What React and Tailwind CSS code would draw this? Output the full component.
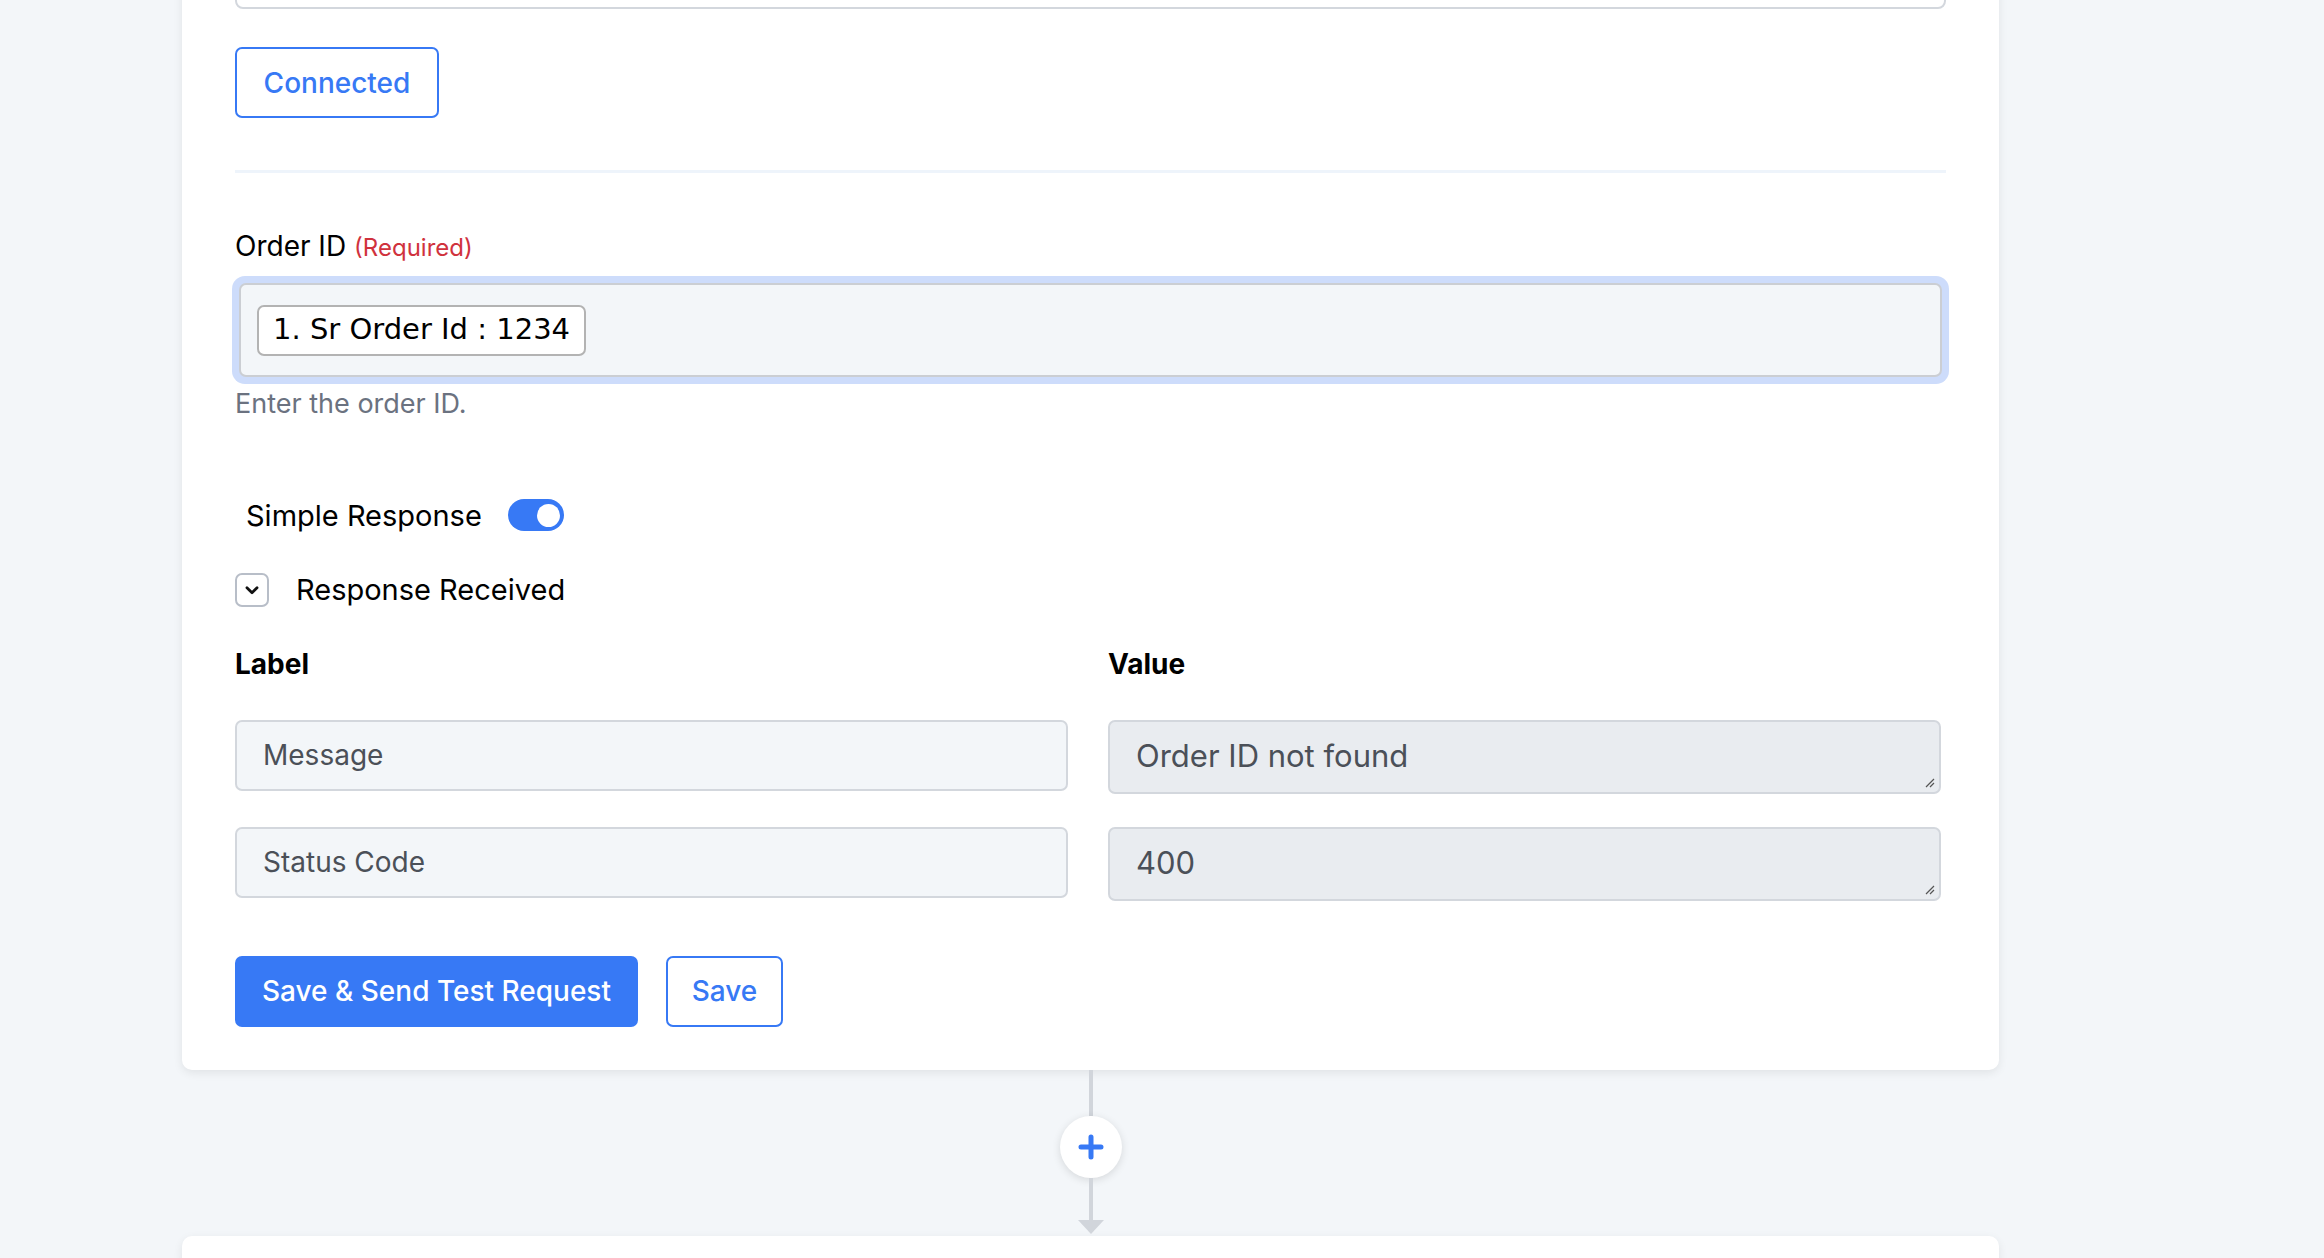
import React from 'react';

const font = { fontFamily: 'Inter, "Noto Sans", sans-serif' };

const Toggle = ({ on }) => (
  <span
    className={`inline-flex items-center w-[56px] h-[32px] rounded-full px-[4px] ${
      on ? 'bg-[#3779f5] justify-end' : 'bg-gray-300 justify-start'
    }`}
  >
    <span className="block w-[23px] h-[23px] rounded-full bg-white" />
  </span>
);

const ChevronBox = () => (
  <span className="flex items-center justify-center w-[34px] h-[34px] rounded-[7px] border-2 border-[#b8bec8] bg-white">
    <svg width="22" height="22" viewBox="0 0 24 24" fill="none" stroke="#111" strokeWidth="3" strokeLinecap="round" strokeLinejoin="round">
      <path d="M6.5 9.5l5.5 5.5 5.5-5.5" />
    </svg>
  </span>
);

const FieldInput = ({ value }) => (
  <div className="h-[71px] flex items-center px-[26px] rounded-[7px] border-2 border-[#d3d7dd] bg-[#f3f6f9] text-[28px] text-[#4b5058]">
    {value}
  </div>
);

const FieldArea = ({ value }) => (
  <div className="relative h-[74px] flex items-center px-[26px] rounded-[7px] border-2 border-[#d3d7dd] bg-[#e9ecf0] text-[31px] text-[#4b5058]">
    {value}
    {/* resize grip */}
    <svg className="absolute right-[4px] bottom-[4px]" width="10" height="10" viewBox="0 0 10 10" stroke="#555" strokeWidth="1.2">
      <path d="M9 1L1 9M9 5L5 9" />
    </svg>
  </div>
);

const responseRows = [
  { label: 'Message', value: 'Order ID not found' },
  { label: 'Status Code', value: '400' },
];

export default function App() {
  return (
    <div className="h-[1258px] overflow-hidden bg-[#f3f6f9]" style={font}>
      <div className="ml-[182px] w-[1817px]">
        {/* step card */}
        <div className="-mt-[60px] bg-white rounded-[10px] shadow-[0_3px_10px_rgba(0,0,0,0.08)] px-[53px] pb-[43px]">
          <div className="h-[69px] rounded-[8px] border-2 border-[#d3d7dd] bg-white" />

          <div className="pt-[38px]">
            <button className="h-[71px] w-[204px] rounded-[7px] border-2 border-[#3779f5] bg-white text-[28px] font-medium text-[#3779f5]">
              Connected
            </button>
          </div>

          <div className="mt-[52px] h-[3px] bg-[#eef4fb]" />

          {/* order id */}
          <div className="mt-[52px] flex items-baseline gap-[8px]">
            <span className="text-[28px] text-black">Order ID</span>
            <span className="text-[24px] text-[#d0323d]">(Required)</span>
          </div>
          <div className="mt-[9px] mx-[-3px] p-[7px] rounded-[13px] bg-[#cddcfb]">
            <div className="h-[94px] flex items-center px-[16px] rounded-[7px] border-2 border-[#cbced3] bg-[#f3f6f9]">
              <span
                className="h-[51px] flex items-center px-[14px] rounded-[7px] border-2 border-[#b3b3b3] bg-white text-[29px] text-black"
                style={{ fontFamily: '"DejaVu Sans", sans-serif' }}
              >
                1. Sr Order Id : 1234
              </span>
            </div>
          </div>
          <p className="mt-0 text-[27px] text-[#6b7280]">Enter the order ID.</p>

          {/* simple response toggle */}
          <div className="mt-[69px] ml-[11px] flex items-center gap-[26px]">
            <span className="text-[29px] text-black">Simple Response</span>
            <Toggle on />
          </div>

          <div className="mt-[31px] flex items-center gap-[27px]">
            <ChevronBox />
            <span className="text-[29px] text-black">Response Received</span>
          </div>

          {/* response fields */}
          <div className="mt-[31px] w-[1706px] grid grid-cols-2 gap-x-[40px]">
            <div className="text-[28px] font-bold text-black">Label</div>
            <div className="text-[28px] font-bold text-black">Value</div>
            {responseRows.map((row, i) => (
              <React.Fragment key={row.label}>
                <div className={i === 0 ? 'mt-[35px]' : 'mt-[33px]'}>
                  <FieldInput value={row.label} />
                </div>
                <div className={i === 0 ? 'mt-[35px]' : 'mt-[33px]'}>
                  <FieldArea value={row.value} />
                </div>
              </React.Fragment>
            ))}
          </div>

          <div className="mt-[55px] flex items-center gap-[28px]">
            <button className="h-[71px] px-[27px] rounded-[7px] bg-[#3779f5] text-[28px] font-medium text-white">
              Save &amp; Send Test Request
            </button>
            <button className="h-[71px] w-[117px] rounded-[7px] border-2 border-[#3779f5] bg-white text-[28px] font-medium text-[#3779f5]">
              Save
            </button>
          </div>
        </div>

        {/* connector to next step */}
        <div className="flex flex-col items-center w-[1817px]">
          <div className="w-[4px] h-[46px] bg-[#d1d5db]" />
          <button className="w-[62px] h-[62px] rounded-full bg-white shadow-[0_2px_8px_rgba(0,0,0,0.12)] flex items-center justify-center">
            <svg width="28" height="28" viewBox="0 0 28 28" stroke="#3779f5" strokeWidth="5" strokeLinecap="round">
              <path d="M14 4v20M4 14h20" />
            </svg>
          </button>
          <div className="w-[4px] h-[44px] bg-[#d1d5db]" />
          <svg width="26" height="14" viewBox="0 0 26 14" className="-mt-[2px]">
            <path d="M0 0h26L13 14z" fill="#d1d5db" />
          </svg>
        </div>

        <div className="mt-[2px] h-[60px] bg-white rounded-[10px] shadow-[0_3px_10px_rgba(0,0,0,0.08)]" />
      </div>
    </div>
  );
}
